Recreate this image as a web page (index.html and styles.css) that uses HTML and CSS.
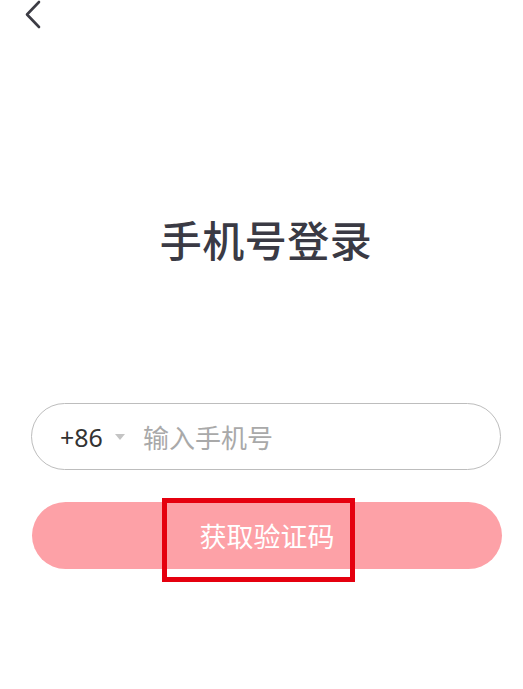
FILE: index.html
```html
<!DOCTYPE html>
<html lang="zh-CN">
<head>
    <meta charset="UTF-8">
    <meta name="viewport" content="width=device-width, initial-scale=1.0">
    <title>手机号登录</title>
    <link rel="stylesheet" href="styles.css">
</head>
<body>
    <header class="top-bar">
        <button class="back-btn" aria-label="返回">
            <svg width="18" height="30" viewBox="0 0 18 30">
                <polyline points="15,2 3,14.5 15,27" fill="none" stroke="#3c3c44" stroke-width="2.6" stroke-linecap="round" stroke-linejoin="round"/>
            </svg>
        </button>
    </header>

    <main class="login">
        <h1 class="login-title">手机号登录</h1>

        <form class="login-form">
            <div class="phone-field">
                <span class="area-code">+86</span>
                <span class="area-arrow"></span>
                <input type="tel" class="phone-input" placeholder="输入手机号">
            </div>
            <div class="code-wrap">
                <button type="submit" class="code-btn">获取验证码</button>
                <span class="mark-box"></span>
            </div>
        </form>
    </main>
</body>
</html>
```

FILE: styles.css
```css
html, body {
    min-height: 100%;
}
body {
    margin: 0;
    min-height: 100vh;
    background: #fff;
    font-family: "Noto Sans CJK SC", "Noto Sans", sans-serif;
    color: #3a3a42;
}
.top-bar {
    height: 32px;
    padding-left: 24px;
}
.back-btn {
    display: block;
    padding: 0;
    border: none;
    background: none;
    cursor: pointer;
}
.login {
    padding: 0 22px 100px 31px;
}
.login-title {
    margin: 175px 0 0;
    text-align: center;
    font-size: 42px;
    line-height: 64px;
    font-weight: 500;
    letter-spacing: 0.5px;
    color: #3a3a44;
}
.login-form {
    margin-top: 132px;
    display: flex;
    flex-direction: column;
    gap: 32px;
}
.phone-field {
    display: flex;
    align-items: center;
    height: 65px;
    padding: 0 28px;
    border: 1px solid #bdbdbd;
    border-radius: 34px;
}
.area-code {
    font-family: "Noto Sans", "Liberation Sans", sans-serif;
    font-size: 25px;
    color: #333;
}
.area-arrow {
    width: 0;
    height: 0;
    margin: 0 18px 0 12px;
    border-left: 5px solid transparent;
    border-right: 5px solid transparent;
    border-top: 6px solid #c4c4c4;
}
.phone-input {
    flex: 1;
    border: none;
    outline: none;
    padding: 0;
    font-family: inherit;
    font-size: 26px;
    color: #333;
}
.phone-input::placeholder {
    color: #a9a9a9;
}
.code-wrap {
    position: relative;
    height: 67px;
}
.code-btn {
    display: block;
    width: 100%;
    height: 67px;
    margin-left: 1px;
    border: none;
    border-radius: 34px;
    background: #fda1a7;
    color: #fff;
    font-family: inherit;
    font-size: 27px;
    cursor: pointer;
}
/* red highlight frame round the button label */
.mark-box {
    position: absolute;
    display: block;
    box-sizing: border-box;
    left: 131px;
    top: -4px;
    width: 193px;
    height: 84px;
    border: 5px solid #e5000f;
}
```
